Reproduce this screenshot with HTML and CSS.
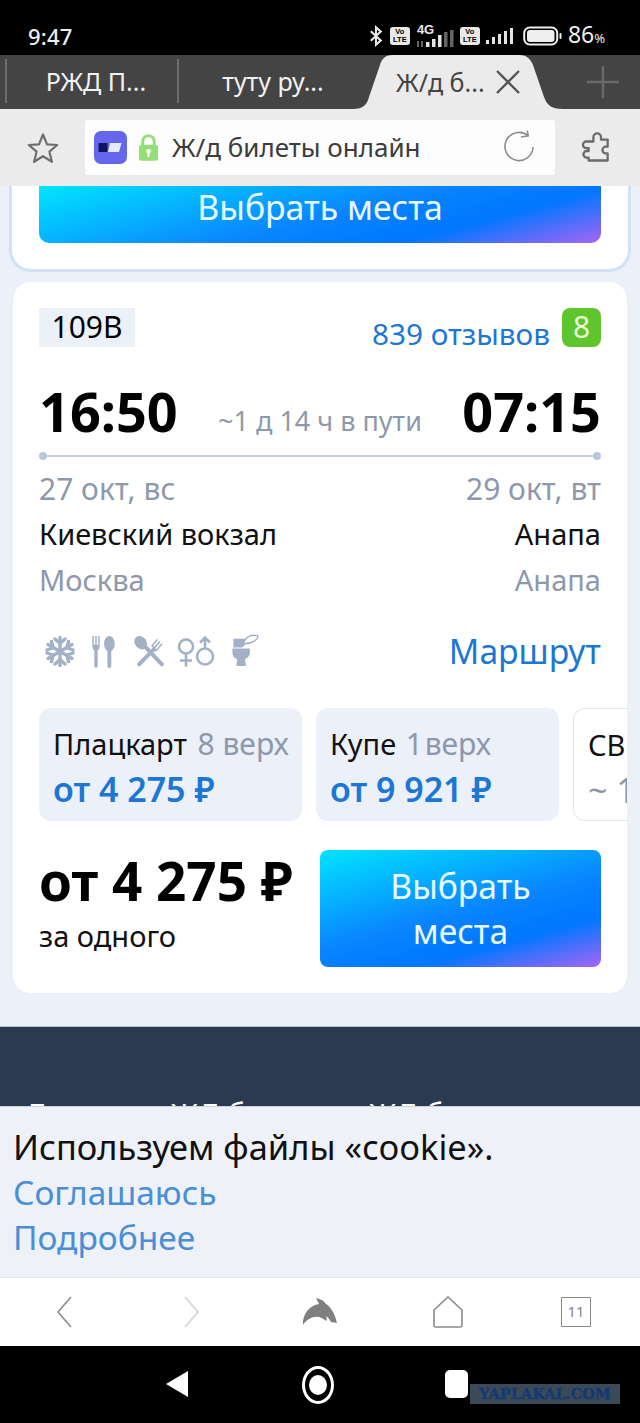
FILE: index.html
```html
<!DOCTYPE html>
<html lang="ru">
<head>
<meta charset="utf-8">
<title>Ж/д билеты онлайн</title>
<link rel="stylesheet" href="styles.css">
</head>
<body>
<div class="phone">
  <header class="status">
    <span class="clock">9:47</span>
    <div class="status-icons">
      <svg class="ic-bt" viewBox="0 0 16 24"><path d="M2 6.500 13.500 17 8 22V2l5.500 5L2 17.500" fill="none" stroke="#e8e8e8" stroke-width="2.400"/></svg>
      <span class="volte">Vo<br>LTE</span>
      <span class="net"><span class="net-label">4G</span>
        <svg class="ic-sig" viewBox="0 0 38 18"><g fill="#e4e4e4"><rect x="10" y="12" width="3.500" height="5"/><rect x="16" y="9" width="3.500" height="8"/><rect x="22" y="5" width="3.500" height="12"/></g><g fill="#666"><rect x="28" y="2" width="3.500" height="15"/><rect x="34" y="0" width="3.500" height="17"/><rect x="1" y="11" width="2" height="6"/><rect x="5" y="11" width="2" height="6"/></g></svg>
      </span>
      <span class="volte">Vo<br>LTE</span>
      <svg class="ic-sig2" viewBox="0 0 28 18"><g fill="#e4e4e4"><rect x="0" y="13" width="3" height="4"/><rect x="6" y="10" width="3" height="7"/><rect x="12" y="7" width="3" height="10"/><rect x="18" y="4" width="3" height="13"/><rect x="24" y="1" width="3" height="16"/></g></svg>
      <svg class="ic-bat" viewBox="0 0 40 20"><rect x="1.200" y="1.500" width="33" height="17" rx="5.500" fill="none" stroke="#eee" stroke-width="2"/><rect x="4" y="4" width="27.500" height="12" rx="3" fill="#eee"/><rect x="36.500" y="7" width="2" height="6" rx="1" fill="#eee"/></svg>
      <span class="pct">86<small>%</small></span>
    </div>
  </header>

  <nav class="tabs">
    <div class="tab tab-first">РЖД П...</div>
    <div class="tab tab-second">туту ру...</div>
    <div class="tab-active">
      <svg class="tab-shape" viewBox="0 0 210 54" preserveAspectRatio="none"><path d="M0 54C10 54 14 50 16 42L27 10C29 3 33 0 40 0H166C173 0 177 3 180 10L191 42C194 50 198 54 210 54Z" fill="#ebebeb"/></svg>
      <span class="tab-active-label">Ж/д б...</span>
      <svg class="tab-x" viewBox="0 0 26 26"><path d="M2 2 24 24M24 2 2 24" stroke="#555" stroke-width="2.400" fill="none"/></svg>
    </div>
    <svg class="tab-plus" viewBox="0 0 34 34"><path d="M17 1V33M1 17H33" stroke="#6a6a6a" stroke-width="2.400" fill="none"/></svg>
  </nav>

  <div class="urlbar">
    <svg class="ic-star" viewBox="0 0 32 32"><path d="M16 2.500 20 12.300 30.200 13 22.400 19.700 24.900 29.800 16 24.300 7.100 29.800 9.600 19.700 1.800 13 12 12.300Z" fill="none" stroke="#6e6e6e" stroke-width="2.200" stroke-linejoin="round"/></svg>
    <div class="urlfield">
      <svg class="ic-logo" viewBox="0 0 33 33"><rect width="33" height="33" rx="7" fill="#6467ec"/><rect x="4.500" y="12" width="9" height="9" rx="1" fill="#12135f"/><path d="M16 12H27.500L25 21H14Z" fill="#e6ebfb"/></svg>
      <svg class="ic-lock" viewBox="0 0 22 30"><path d="M5 13V8.500a6 6 0 0 1 12 0V13" fill="none" stroke="#93df75" stroke-width="3"/><rect x="1" y="12" width="20" height="17" rx="2.500" fill="#93df75"/><circle cx="11" cy="19" r="2.500" fill="#fff"/><rect x="10" y="20" width="2" height="5" fill="#fff"/></svg>
      <span class="urltext">Ж/д билеты онлайн</span>
      <svg class="ic-reload" viewBox="0 0 34 34"><path d="M26 5.500A14.500 14.500 0 1 0 31 17" fill="none" stroke="#8c8c8c" stroke-width="1.600"/><path d="M18.500 6.800 26 5.500 25 0" fill="none" stroke="#8c8c8c" stroke-width="1.600"/></svg>
    </div>
    <svg class="ic-ext" viewBox="0 0 32 32"><path d="M12 5.500a4 4 0 0 1 8 0V8h7v7.500h-2a3.500 3.500 0 0 0 0 7h2V30H7v-3H5a3.500 3.500 0 0 1 0-7h2v-3H4.500a3.500 3.500 0 0 1 0-7H12Z" transform="translate(1 0) scale(.95)" fill="none" stroke="#6a6a6a" stroke-width="2.400" stroke-linejoin="round"/></svg>
  </div>

  <main class="content">
    <section class="prev-card">
      <button class="btn btn-wide">Выбрать места</button>
    </section>

    <section class="card">
      <div class="card-top">
        <span class="train-no">109В</span>
        <a class="reviews">839 отзывов</a>
        <span class="score">8</span>
      </div>
      <div class="times">
        <span class="time">16:50</span>
        <span class="duration">~1 д 14 ч в пути</span>
        <span class="time">07:15</span>
      </div>
      <div class="track"></div>
      <div class="row row-date"><span>27 окт, вс</span><span>29 окт, вт</span></div>
      <div class="row row-station"><span>Киевский вокзал</span><span>Анапа</span></div>
      <div class="row row-city"><span>Москва</span><span>Анапа</span></div>
      <div class="amenities">
        <div class="amenity-icons">
          <svg class="am am-snow" viewBox="0 0 30 32"><g stroke="#a3b1c6" stroke-width="3.400" fill="none" stroke-linecap="round"><path d="M15 2V30M3 9 27 23M27 9 3 23"/><path d="M10 3.500 15 8 20 3.500M10 28.500 15 24 20 28.500M2 14.500 8 12.500 6.500 6M28 14.500 22 12.500 23.500 6M2 17.500 8 19.500 6.500 26M28 17.500 22 19.500 23.500 26"/></g></svg>
          <svg class="am am-cutlery" viewBox="0 0 26 34"><g fill="#a3b1c6"><path d="M1 1h1.500v9H4V1h1.500v9H7V1h1.500v11c0 2-1 3-2 3.500V32a1.700 1.700 0 0 1-3.500 0V15.500C2 15 1 14 1 12Z"/><ellipse cx="18.500" cy="9" rx="5.500" ry="8"/><path d="M16.500 14h4v18a2 2 0 0 1-4 0Z"/></g></svg>
          <svg class="am am-cross" viewBox="0 0 34 34"><g fill="#a3b1c6"><ellipse cx="7.500" cy="8" rx="6" ry="7.500" transform="rotate(-40 7.500 8)"/><path d="M10 13 13 10 31 29a2.200 2.200 0 0 1-3 3Z"/><path d="M4 29 20 13l-2-2 6-7 1.200 1-5 6 1.200 1.200 5-6 1.200 1.200-5 6 1.200 1.200 5-6 1.200 1-6 7-2.500.5L7 32a2.200 2.200 0 0 1-3-3Z"/></g></svg>
          <svg class="am am-wc" viewBox="0 0 38 32"><g fill="none" stroke="#a3b1c6" stroke-width="2.600"><circle cx="9" cy="11" r="7"/><path d="M9 18V31M3 25H15"/><circle cx="28" cy="21" r="8"/><path d="M28 13V2M23 7 28 2 33 7"/></g></svg>
          <svg class="am am-toilet" viewBox="0 0 28 34"><g fill="#a3b1c6"><path d="M1 5H13V11L10 14H1Z"/><path d="M0 15H18V19C18 23 15 25 13 26L14 33H4L5 26C2 25 0 23 0 19Z"/></g><path d="M12 9C13 3 20 0 26 2C27 5 21 10 13 10Z" fill="#fff" stroke="#a3b1c6" stroke-width="1.400"/></svg>
        </div>
        <a class="route">Маршрут</a>
      </div>
      <div class="cars">
        <div class="car car-a"><div class="car-name">Плацкарт <span class="car-seats">8 верх</span></div><div class="car-price">от 4 275 ₽</div></div>
        <div class="car car-b"><div class="car-name">Купе <span class="car-seats">1 верх</span></div><div class="car-price">от 9 921 ₽</div></div>
        <div class="car car-c"><div class="car-name">СВ</div><div class="car-price car-price-muted">~ 1</div></div>
      </div>
      <div class="buy">
        <div class="buy-price">
          <div class="total">от 4 275 ₽</div>
          <div class="per">за одного</div>
        </div>
        <button class="btn btn-buy">Выбрать<br>места</button>
      </div>
    </section>

    <footer class="dark">
      <p class="dark-text">Дешевые ЖД билеты и ЖД билеты</p>
    </footer>
  </main>

  <aside class="cookie">
    <p>Используем файлы «cookie».</p>
    <a>Соглашаюсь</a>
    <a>Подробнее</a>
  </aside>

  <nav class="toolbar">
    <svg class="tb tb-back" viewBox="0 0 16 32"><path d="M15 1 2 16 15 31" fill="none" stroke="#8a8a8a" stroke-width="1.600"/></svg>
    <svg class="tb tb-fwd" viewBox="0 0 16 32"><path d="M1 1 14 16 1 31" fill="none" stroke="#d2d2d2" stroke-width="1.600"/></svg>
    <svg class="tb tb-dolphin" viewBox="0 0 36 30"><path d="M1 28C0 17 8 8 17 7C16 5 15 3 14 1C19 2 22 4 24 7C29 10 33 17 35 26C33 26 31 25 29 25C27 22 27 21 24 19C25 21 25 22 24 24C22 22 20 21 17 20C11 19 5 22 1 28Z" fill="#7f7f7f"/></svg>
    <svg class="tb tb-home" viewBox="0 0 30 32"><path d="M15 1 29 14V29a2 2 0 0 1-2 2H3a2 2 0 0 1-2-2V14Z" fill="none" stroke="#8a8a8a" stroke-width="1.600"/></svg>
    <span class="tb-count">11</span>
  </nav>

  <nav class="sysnav">
    <span class="sys-back"></span>
    <span class="sys-home"></span>
    <span class="sys-recent"></span>
    <span class="watermark">YAPLAKAL.COM</span>
  </nav>
</div>
</body>
</html>
```
FILE: styles.css
```css
* { box-sizing: border-box; }
html, body { margin: 0; padding: 0; }
body { font-family: "Noto Sans", "Liberation Sans", sans-serif; background: #000; }
svg { display: block; flex: none; }
p { margin: 0; }

.phone { width: 640px; height: 1423px; display: flex; flex-direction: column; overflow: hidden; }

/* status bar */
.status { height: 55px; flex: none; background: #000; color: #eee; display: flex; justify-content: space-between; align-items: center; padding: 17px 35px 0 28px; }
.clock { font-size: 22px; font-weight: 500; letter-spacing: .2px; }
.status-icons { display: flex; align-items: center; }
.ic-bt { width: 14px; height: 24px; margin-right: 7px; }
.volte { width: 20px; height: 18px; border-radius: 3px; background: #e8e8e8; color: #000; font: 700 7.500px/8px "Liberation Sans", sans-serif; text-align: center; padding-top: 1px; margin-right: 6px; }
.net { position: relative; width: 38px; height: 24px; margin-right: 6px; }
.net-label { position: absolute; left: 1px; top: -1px; font: 700 13px/13px "Liberation Sans", sans-serif; color: #e8e8e8; }
.ic-sig { position: absolute; left: 0; bottom: 0; width: 38px; height: 18px; }
.ic-sig2 { width: 28px; height: 18px; margin-right: 9px; }
.ic-bat { width: 40px; height: 20px; margin-right: 5px; }
.pct { font-size: 23px; line-height: 26px; }
.pct small { font-size: 13px; }

/* tabs */
.tabs { height: 54px; flex: none; background: #444; display: flex; align-items: center; color: #f2f2f2; font-size: 25px; position: relative; }
.tab { height: 44px; display: flex; align-items: center; justify-content: center; border-left: 2px solid #6e6e6e; margin-top: -2px; }
.tab-first { margin-left: 5px; width: 172px; padding-left: 8px; }
.tab-second { width: 180px; padding-left: 10px; }
.tab-active { width: 210px; height: 54px; margin-left: -4px; position: relative; display: flex; align-items: center; color: #444; padding: 0 0 0 43px; flex: none; }
.tab-shape { position: absolute; left: 0; top: 0; width: 210px; height: 54px; }
.tab-active-label { position: relative; }
.tab-x { position: relative; width: 26px; height: 26px; margin-left: 10px; }
.tab-plus { width: 34px; height: 34px; margin-left: 23px; }

/* url bar */
.urlbar { height: 77px; flex: none; background: #ebebeb; display: flex; align-items: center; padding: 0 27px 0 27px; position: relative; z-index: 2; }
.ic-star { width: 32px; height: 32px; }
.urlfield { width: 470px; height: 55px; margin: -1px 26px 0 26px; background: #fdfdfd; border-radius: 3px; display: flex; align-items: center; padding: 0 19px 0 9px; }
.ic-logo { width: 33px; height: 33px; }
.ic-lock { width: 21px; height: 29px; margin-left: 11px; }
.urltext { font-size: 26px; color: #3c3c3c; margin-left: 13px; flex: 1; white-space: nowrap; }
.ic-reload { width: 33px; height: 34px; }
.ic-ext { width: 32px; height: 32px; }

/* content */
.content { flex: 1; min-height: 0; overflow: hidden; background: #ebf0f9; }
.btn { display: block; border: 0; color: #e9fbff; font-family: inherit; background: linear-gradient(165deg, #00e5ff 0%, #0a84ff 52%, #0077ff 74%, #a864f5 100%); }
.prev-card { margin: 0 9px; height: 86px; background: #fff; border: 3px solid #cfe2f8; border-top: 0; border-radius: 0 0 22px 22px; padding: 0 27px; }
.btn-wide { width: 562px; height: 57px; font-size: 33.800px; border-radius: 0 0 10px 10px; line-height: 42px; padding: 0 0 15px; }

.card { margin: 10px 13px 0; height: 711px; background: #fff; border-radius: 18px; padding: 26px 26px 0; overflow: hidden; }
.card-top { display: flex; align-items: center; height: 39px; }
.train-no { width: 96px; height: 39px; background: #ebf0f9; color: #000; font-size: 30px; line-height: 37px; text-align: center; }
.reviews { margin-left: auto; color: #1c77d4; font-size: 29.700px; line-height: 50px; margin-top: 12px; }
.score { width: 39px; height: 39px; margin-left: 12px; background: #5fc52d; color: #eaffdc; border-radius: 8px; font-size: 30px; line-height: 38px; text-align: center; }
.times { display: flex; justify-content: space-between; align-items: center; height: 64px; margin-top: 32px; }
.time { font-size: 54px; font-weight: 700; color: #000; line-height: 64px; }
.duration { font-size: 27px; color: #8d99ab; padding-top: 18px; }
.track { position: relative; height: 2px; margin: 12px 3px 0; background: #c6d0de; }
.track::before, .track::after { content: ""; position: absolute; top: -3px; width: 8px; height: 8px; border-radius: 50%; background: #b6c6dc; }
.track::before { left: -3px; }
.track::after { right: -3px; }
.row { display: flex; justify-content: space-between; }
.row-date { font-size: 30px; color: #8d99ab; line-height: 46px; margin-top: 9px; }
.row-station { font-size: 29px; color: #111; line-height: 46px; margin-top: -1px; }
.row-city { font-size: 29px; color: #8d99ab; line-height: 46px; }
.amenities { display: flex; justify-content: space-between; align-items: center; margin-top: 23px; height: 50px; }
.amenity-icons { display: flex; align-items: center; margin-left: 6px; }
.am { height: 33px; }
.am-snow { width: 30px; }
.am-cutlery { width: 26px; margin-left: 16px; }
.am-cross { width: 34px; margin-left: 16px; }
.am-wc { width: 38px; margin-left: 10px; }
.am-toilet { width: 28px; margin-left: 17px; margin-top: -2px; }
.route { color: #1c77d4; font-size: 33.700px; line-height: 50px; }
.cars { display: flex; gap: 14px; margin-top: 32px; margin-right: -26px; height: 113px; }
.car { flex: none; border-radius: 12px; background: #ebf0f9; padding: 13px 14px 0 14px; overflow: hidden; white-space: nowrap; }
.car-a { width: 263px; }
.car-b { width: 243px; }
.car-b .car-seats { margin-left: 2px; word-spacing: -6px; }
.car-c { width: 60px; background: #fff; border: 1px solid #e2e8f1; border-right: 0; border-radius: 12px 0 0 12px; }
.car-name { font-size: 29px; line-height: 46px; color: #111; }
.car-seats { color: #8d99ab; font-size: 30px; margin-left: 3px; }
.car-price { font-size: 34px; font-weight: 600; line-height: 44px; color: #1c77d4; }
.car-price-muted { color: #8d99ab; font-weight: 400; }
.buy { display: flex; justify-content: space-between; margin-top: 29px; }
.total { font-size: 53px; font-weight: 700; color: #000; line-height: 62px; white-space: nowrap; }
.per { font-size: 29px; color: #111; line-height: 40px; margin-top: 4px; }
.btn-buy { width: 281px; height: 117px; border-radius: 8px; font-size: 33.700px; line-height: 45px; }

.dark { margin-top: 33px; height: 80px; background: #2b3a50; border-top: 1px solid #b5c0cf; padding: 70px 25px 0 25px; overflow: hidden; }
.dark-text { color: #fff; font-size: 30px; line-height: 36px; white-space: nowrap; }

/* cookie */
.cookie { height: 171px; flex: none; background: #eef2f8; border-top: 1px solid #cfd3da; padding: 17px 13px 0; display: flex; flex-direction: column; font-size: 33.500px; line-height: 45.500px; }
.cookie p { color: #111; font-size: 34.400px; }
.cookie a { color: #4a8ed6; }

/* toolbar */
.toolbar { height: 69px; flex: none; background: #fff; border-top: 1px solid #e8e8e8; display: flex; align-items: center; position: relative; padding-left: 56px; }
.tb { height: 32px; }
.tb-back { width: 16px; }
.tb-fwd { width: 16px; margin-left: 112px; }
.tb-dolphin { width: 36px; height: 30px; margin-left: 102px; }
.tb-home { width: 30px; margin-left: 95px; }
.tb-count { width: 30px; height: 30px; margin-left: 98px; border: 1.500px solid #8a8a8a; font-size: 15px; line-height: 27px; color: #888; text-align: center; }

/* system nav */
.sysnav { height: 77px; flex: none; background: #000; position: relative; display: flex; align-items: center; padding-left: 166px; }
.sys-back { width: 0; height: 0; border-style: solid; border-width: 13px 22px 13px 0; border-color: transparent #fff transparent transparent; margin-top: -1px; }
.sys-home { width: 32px; height: 38px; border: 3px solid #fff; border-radius: 50%; margin-left: 114px; display: flex; position: relative; }
.sys-home::after { content: ""; position: absolute; left: 4px; top: 6px; width: 18px; height: 20px; border-radius: 50%; background: #fff; }
.sys-recent { width: 23px; height: 28px; background: #fff; border-radius: 5px; margin-left: 111px; margin-top: -2px; }
.watermark { position: absolute; left: 470px; top: 38px; width: 150px; height: 20px; background: #3c4957; color: #143a72; font: 700 14.500px/20px "DejaVu Serif", serif; -webkit-text-stroke: .4px #143a72; text-align: center; white-space: nowrap; overflow: hidden; }
```
